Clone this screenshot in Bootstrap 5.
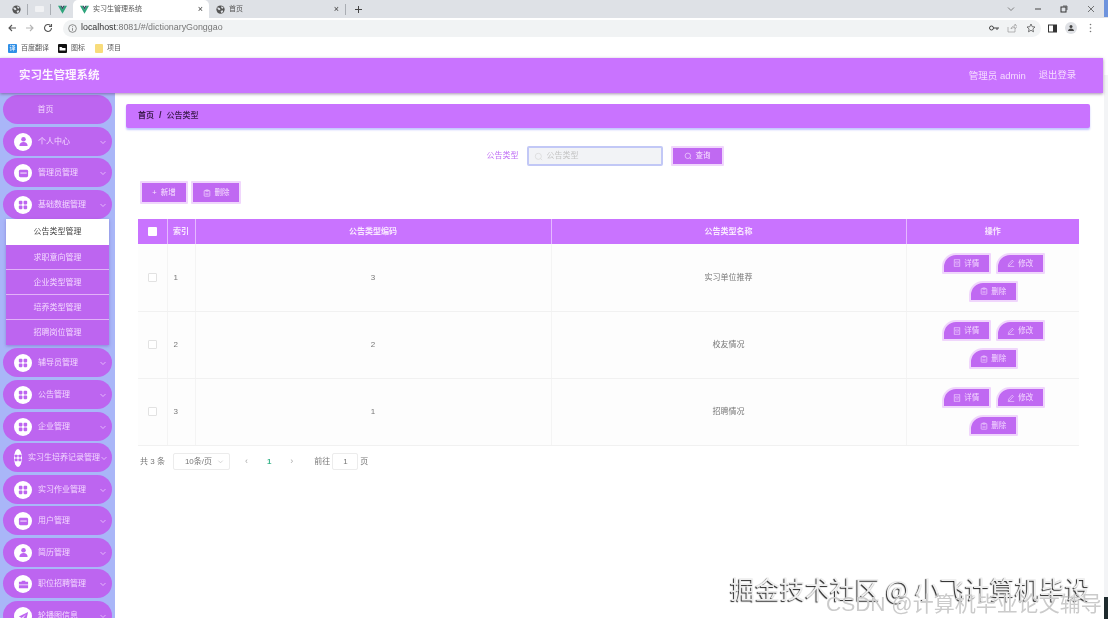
<!DOCTYPE html>
<html lang="zh-CN">
<head>
  <meta charset="UTF-8">
  <title>实习生管理系统</title>
  <link href="https://cdn.jsdelivr.net/npm/bootstrap@5.3.3/dist/css/bootstrap.min.css" rel="stylesheet">
  <style>
    html, body { height: 621px; overflow: hidden; background: #fff; }
    body { font-family: "Liberation Sans", "Noto Sans CJK SC", sans-serif; font-size: 8px; color: #666; filter: blur(.3px); }
    svg { display: block; flex: none; }

    /* browser chrome */
    .tab-strip { height: 18px; background: #dee1e6; color: #555; padding-left: 5px; }
    .mini-tab { width: 22px; height: 18px; }
    .tab-sep { width: 1px; height: 11px; background: #a9adb3; }
    .page-tab { width: 136px; height: 18px; padding: 0 6px 0 7px; font-size: 7px; border-radius: 5px 5px 0 0; }
    .page-tab.on { background: #fff; }
    .tab-title { flex: 1; margin-left: 4px; white-space: nowrap; }
    .tab-x { font-size: 9px; line-height: 1; color: #444; }
    .win-group { width: 106px; }
    .win-btn { width: 26.5px; }
    .url-row { height: 20px; background: #fff; padding-left: 7px; }
    .url-pill { width: 978px; height: 17px; margin-left: 10px; background: #f1f3f4; border-radius: 9px; padding: 0 5px 0 5px; font-size: 8.9px; color: #777; }
    .url-host { color: #333; }
    .url-share { margin-left: 8px; }
    .url-star { margin-left: 9px; }
    .url-right { margin-left: 7px; }
    .bm-row { height: 20px; background: #fff; padding-left: 8px; font-size: 7px; color: #555; }
    .bm-ic { width: 9px; height: 9px; border-radius: 1px; color: #fff; background: #2f8fe6; font-size: 6px; line-height: 9px; text-align: center; }
    .bm-two { margin-left: 9px; }
    .bm-three { margin-left: 10px; }

    /* app */
    .app-wrap { width: 1103px; height: 561px; }
    .app-top { height: 35px; background: #c973ff; box-shadow: 0 1px 3px rgba(90,50,110,.55); color: #f6dcff; padding: 1px 27px 0 19px; position: relative; z-index: 2; }
    .app-title { font-size: 11.5px; font-weight: 700; color: #fdf3ff; }
    .app-user { font-size: 9.5px; margin-right: 13px; }
    .app-exit { font-size: 9.3px; }
    .side-bar { width: 115px; height: 525px; background: #a9b6f8; padding: 2px 3px 0; overflow: hidden; flex: none; }
    .side-item { height: 29px; margin-bottom: 2.6px; padding: 1px 5px 0 11px; background: #bd65f0; border-radius: 15px; color: #f3d8ff; white-space: nowrap; }
    .side-item.home { justify-content: center; padding: 1px 24px 0 0; }
    .side-dot { width: 18px; height: 18px; border-radius: 50%; background: #fff; color: #bd65f0; margin-right: 6px; }
    .side-dot.slim { width: 9px; }
    .side-text { flex: 1; overflow: visible; }
    .side-sub { margin: -2px 3px 3px; background: #bd65f0; color: #f3d8ff; box-shadow: 0 1px 3px rgba(90,60,170,.4); }
    .side-sub div { height: 25.2px; line-height: 26px; text-align: center; border-bottom: 1px solid #e2b2f8; }
    .side-sub div:last-child { border-bottom: 0; }
    .side-sub .on { background: #fff; color: #444; border-bottom: 0; }

    .main-area { min-width: 0; padding: 11px 13px 0 11px; }
    .crumb-bar { height: 24px; background: #c973ff; border-radius: 2px; box-shadow: 0 2px 2px #c3c6ff; padding-left: 12px; color: #3a1a4c; font-weight: 700; }
    .crumb-bar i { font-style: normal; margin: 0 5px; font-size: 9px; }
    .crumb-bar span { font-weight: 500; }
    .search-row { margin-top: 18px; height: 20px; padding-right: 6px; }
    .search-label { color: #c06ff5; margin-right: 8px; }
    .search-box { width: 136px; height: 20px; background: #f2f3f6; border: 2px solid #c2c8f6; border-radius: 2px; color: #c4c4c4; padding-left: 5px; margin-right: 8px; }
    .pu-btn { background: #c069f2; color: #f8e4ff; border: 2px solid #f0d6fc; border-radius: 1px; height: 23px; font-size: 7.5px; padding: 0; }
    .search-row .pu-btn { width: 53px; height: 20px; }
    .tool-row { margin: 15px 0 0 14px; height: 23px; gap: 3px; }
    .tool-row .add { width: 48px; }
    .tool-row .del { width: 50px; }
    .data-wrap { margin: 15px 0 0 12px; width: 941px; }
    .data-wrap table { table-layout: fixed; margin: 0; font-size: 8px; }
    .col-tick { width: 29px; }
    .col-idx { width: 28px; }
    .col-code { width: 356px; }
    .col-name { width: 355px; }
    .col-act { width: 173px; }
    .data-wrap th { height: 25px; padding: 0; background: #c973ff; color: #f9e8ff; text-align: center; vertical-align: middle; font-weight: 700; border: 0; border-left: 1px solid #e5b9ff; border-bottom: 0; }
    .data-wrap th:first-child { border-left: 0; }
    .data-wrap td { height: 67px; padding: 1px 0 0; background: #fdfdfd; color: #777; text-align: center; vertical-align: middle; border: 0; border-left: 1px solid #f4f4f4; border-bottom: 1px solid #f1f1f1; }
    .data-wrap td:first-child { border-left: 0; }
    .data-wrap td.num { text-align: left; padding-left: 6px; }
    .data-wrap td.ops { padding-top: 0; }
    .tick { width: 9px; height: 9px; border: 1px solid #e2e2e2; background: #fff; border-radius: 1px; display: inline-block; vertical-align: middle; }
    th .tick { background: #fff; border: 0; }
    .act-row { justify-content: center; gap: 5px; padding-left: 1px; }
    .act-row + .act-row { margin-top: 7px; }
    .act-btn { width: 49px; height: 21px; background: #c069f2; color: #f3d8ff; border: 2px solid #f0d6fc; border-radius: 14px 1px 1px 1px; font-size: 7.5px; padding: 0; gap: 3px; }
    .pager-row { margin: 6px 0 0 14px; height: 20px; color: #777; }
    .page-size { width: 57px; height: 17px; margin: 0 15px 0 8px; border: 1px solid #ececec; border-radius: 2px; padding: 0 5px 0 11px; }
    .page-cur { margin: 0 19px; color: #3cb58c; font-weight: 700; }
    .page-go { margin-left: 21px; }
    .page-jump { width: 26px; height: 17px; margin: 0 2px; border: 1px solid #ececec; border-radius: 2px; text-align: center; line-height: 15px; }
    .page-arrow { color: #aaa; font-size: 9px; line-height: 1; }

    /* overlays */
    .mark-one { position: absolute; left: 730px; top: 572px; font-size: 25px; line-height: 32px; color: #efefef; text-shadow: -1px 1px 1px #222; white-space: nowrap; font-family: "Noto Sans CJK SC", sans-serif; }
    .mark-two { position: absolute; left: 826px; top: 590px; font-size: 21px; line-height: 28px; color: #cbcbcb; white-space: nowrap; width: 282px; overflow: hidden; font-family: "Liberation Sans", "Noto Sans CJK SC", sans-serif; }
    .edge-top { position: absolute; left: 1104px; top: 0; width: 4px; height: 17px; background: #6d93dd; }
    .edge-side { position: absolute; left: 1104px; top: 75px; width: 4px; height: 522px; background: #f3f4f6; }
    .edge-low { position: absolute; left: 1104px; top: 597px; width: 4px; height: 22px; background: #1f2b2e; }
  </style>
</head>
<body>
<svg width="0" height="0" class="position-absolute">
  <symbol id="i-globe" viewBox="0 0 12 12"><circle cx="6" cy="6" r="5.5" fill="#555"/><path d="M2 3l3 1 1 2-2 1-2-2zM7 1.5l3 1.5-1 2-2-1zM6 8l3-1 .5 2-2 2z" fill="#dee1e6"/></symbol>
  <symbol id="i-vue" viewBox="0 0 12 12"><path d="M0 1h3l3 5 3-5h3L6 11.5z" fill="#2fa57c"/><path d="M3 1h2l1 2 1-2h2L6 6z" fill="#35495e"/></symbol>
  <symbol id="i-user" viewBox="0 0 12 12"><circle cx="6" cy="3.6" r="2.5" fill="currentColor"/><path d="M1.5 11c0-3 2-4.5 4.5-4.5s4.500 1.500 4.500 4.500z" fill="currentColor"/></symbol>
  <symbol id="i-grid" viewBox="0 0 12 12"><rect x="1" y="1" width="4.300" height="4.300" rx="1" fill="currentColor"/><rect x="6.700" y="1" width="4.300" height="4.300" rx="1" fill="currentColor"/><rect x="1" y="6.700" width="4.300" height="4.300" rx="1" fill="currentColor"/><rect x="6.700" y="6.700" width="4.300" height="4.300" rx="1" fill="currentColor"/></symbol>
  <symbol id="i-card" viewBox="0 0 12 12"><rect x="1" y="2" width="10" height="8" rx="1.500" fill="currentColor"/><rect x="2.500" y="5" width="7" height="1" fill="#fff"/></symbol>
  <symbol id="i-bag" viewBox="0 0 12 12"><path d="M4 3V2h4v1h3v7H1V3z" fill="currentColor"/><rect x="1" y="6" width="10" height=".8" fill="#fff"/></symbol>
  <symbol id="i-send" viewBox="0 0 12 12"><path d="M11 1L1 6l3 1.500L9 3.500 5 8.500V11l2-2 2 1z" fill="currentColor"/></symbol>
  <symbol id="i-down" viewBox="0 0 8 8"><path d="M1.500 3L4 5.500 6.500 3" fill="none" stroke="currentColor" stroke-width=".7"/></symbol>
  <symbol id="i-doc" viewBox="0 0 10 10"><rect x="1.500" y="1" width="7" height="8" fill="none" stroke="currentColor" stroke-width=".8"/><path d="M3 6.500h4M3 3.500h4v1.500H3z" fill="none" stroke="currentColor" stroke-width=".6"/></symbol>
  <symbol id="i-pen" viewBox="0 0 10 10"><path d="M2 6.500L6.500 1.500l1.500 1.500L3.500 8 1.800 8.300zM1 9.300h8" fill="none" stroke="currentColor" stroke-width=".8"/></symbol>
  <symbol id="i-clip" viewBox="0 0 10 10"><rect x="1.500" y="2" width="7" height="7" rx=".5" fill="none" stroke="currentColor" stroke-width=".8"/><path d="M3.500 1h3v2h-3zM3 5.500h4M3 7h4" fill="none" stroke="currentColor" stroke-width=".6"/></symbol>
  <symbol id="i-find" viewBox="0 0 10 10"><circle cx="4.800" cy="4.800" r="3.400" fill="none" stroke="currentColor" stroke-width=".8"/><path d="M7.300 7.300L9 9" stroke="currentColor" stroke-width=".8"/></symbol>
</svg>

<div class="tab-strip d-flex align-items-center">
  <div class="mini-tab d-flex align-items-center justify-content-center"><svg width="9" height="9"><use href="#i-globe"/></svg></div>
  <div class="tab-sep"></div>
  <div class="mini-tab d-flex align-items-center justify-content-center"><svg width="9" height="6"><rect width="9" height="6" rx="1" fill="#f1f2f4"/></svg></div>
  <div class="tab-sep"></div>
  <div class="mini-tab d-flex align-items-center justify-content-center"><svg width="9" height="9"><use href="#i-vue"/></svg></div>
  <div class="page-tab on d-flex align-items-center">
    <svg width="9" height="9"><use href="#i-vue"/></svg>
    <span class="tab-title">实习生管理系统</span><span class="tab-x">×</span>
  </div>
  <div class="page-tab d-flex align-items-center">
    <svg width="9" height="9"><use href="#i-globe"/></svg>
    <span class="tab-title">首页</span><span class="tab-x">×</span>
  </div>
  <div class="tab-sep"></div>
  <svg width="9" height="9" class="ms-2" viewBox="0 0 9 9"><path d="M4.500 1v7M1 4.500h7" stroke="#444" stroke-width="1"/></svg>
  <div class="win-group d-flex align-items-center ms-auto me-1">
    <div class="win-btn d-flex justify-content-center"><svg width="8" height="8" viewBox="0 0 8 8"><path d="M1 2.500L4 5.500 7 2.500" fill="none" stroke="#666" stroke-width=".8"/></svg></div>
    <div class="win-btn d-flex justify-content-center"><svg width="8" height="8" viewBox="0 0 8 8"><path d="M1 4h6" stroke="#444"/></svg></div>
    <div class="win-btn d-flex justify-content-center"><svg width="8" height="8" viewBox="0 0 8 8"><rect x="1" y="2" width="5" height="5" fill="none" stroke="#333"/><path d="M3 1h4v4" fill="none" stroke="#333" stroke-width=".7"/></svg></div>
    <div class="win-btn d-flex justify-content-center"><svg width="8" height="8" viewBox="0 0 8 8"><path d="M1 1l6 6M7 1L1 7" stroke="#555" stroke-width=".8"/></svg></div>
  </div>
</div>

<div class="url-row d-flex align-items-center">
  <svg width="10" height="10" viewBox="0 0 10 10"><path d="M9 5H2M5 2L2 5l3 3" fill="none" stroke="#555" stroke-width="1.100"/></svg>
  <svg width="10" height="10" viewBox="0 0 10 10" class="ms-2"><path d="M1 5h7M5 2l3 3-3 3" fill="none" stroke="#b5b5b5" stroke-width="1.100"/></svg>
  <svg width="10" height="10" viewBox="0 0 10 10" class="ms-2"><path d="M8.500 5A3.500 3.500 0 1 1 7.500 2.500M8.500 1v2.500H6" fill="none" stroke="#555" stroke-width="1.100"/></svg>
  <div class="url-pill d-flex align-items-center">
    <svg width="9" height="9" viewBox="0 0 10 10" class="me-1"><circle cx="5" cy="5" r="4.300" fill="none" stroke="#666" stroke-width=".8"/><path d="M5 4.500v3M5 2.500v1" stroke="#666" stroke-width=".8"/></svg>
    <span><span class="url-host">localhost</span>:8081/#/dictionaryGonggao</span>
    <svg width="10" height="8" viewBox="0 0 10 8" class="ms-auto"><circle cx="2.500" cy="4" r="2" fill="none" stroke="#444" stroke-width="1"/><path d="M4.500 4H10M8 4v2" stroke="#444"/></svg>
    <svg width="10" height="10" viewBox="0 0 10 10" class="url-share"><path d="M1 4v5h7V6M4 6c0-2 2-3 4-3V1l2 2.500L8 6V4.500C6 4.500 5 5 4 6z" fill="none" stroke="#999" stroke-width=".7"/></svg>
    <svg width="10" height="10" viewBox="0 0 10 10" class="url-star"><path d="M5 1l1.200 2.700 2.800.3-2.100 1.900.6 2.900L5 7.300 2.500 8.800l.6-2.900L1 4l2.800-.3z" fill="none" stroke="#555" stroke-width=".8"/></svg>
  </div>
  <div class="url-right d-flex align-items-center gap-2">
    <svg width="9" height="9" viewBox="0 0 9 9"><rect x=".5" y="1" width="8" height="7" fill="none" stroke="#333"/><rect x="5" y="1" width="3.500" height="7" fill="#333"/></svg>
    <svg width="12" height="12" viewBox="0 0 12 12"><circle cx="6" cy="6" r="6" fill="#dfe1e5"/><circle cx="6" cy="4.600" r="1.500" fill="#444"/><path d="M3 9c0-1.800 1.300-2.600 3-2.600S9 7.200 9 9z" fill="#444"/></svg>
    <svg width="3" height="10" viewBox="0 0 3 10" class="ms-1"><circle cx="1.500" cy="1.500" r=".8" fill="#777"/><circle cx="1.500" cy="5" r=".8" fill="#777"/><circle cx="1.500" cy="8.500" r=".8" fill="#777"/></svg>
  </div>
</div>

<div class="bm-row d-flex align-items-center">
  <div class="bm-ic">译</div><span class="ms-1">百度翻译</span>
  <svg width="9" height="9" viewBox="0 0 9 9" class="bm-two"><rect width="9" height="9" rx="1" fill="#111"/><path d="M1.500 6.500V3h2l1 1h3v2.500z" fill="#fff"/></svg><span class="ms-1">图标</span>
  <svg width="8" height="9" viewBox="0 0 8 9" class="bm-three"><rect width="8" height="9" rx="1" fill="#f8dc7b"/></svg><span class="ms-1">项目</span>
</div>

<div class="app-wrap">
  <div class="app-top d-flex align-items-center">
    <div class="app-title">实习生管理系统</div>
    <div class="app-user ms-auto">管理员 admin</div>
    <div class="app-exit">退出登录</div>
  </div>
  <div class="d-flex">
    <div class="side-bar">
      <div class="side-item home d-flex align-items-center">首页</div>
      <div class="side-item d-flex align-items-center"><span class="side-dot d-flex align-items-center justify-content-center"><svg width="11" height="11"><use href="#i-user"/></svg></span><span class="side-text">个人中心</span><svg width="8" height="8"><use href="#i-down"/></svg></div>
      <div class="side-item d-flex align-items-center"><span class="side-dot d-flex align-items-center justify-content-center"><svg width="11" height="11"><use href="#i-card"/></svg></span><span class="side-text">管理员管理</span><svg width="8" height="8"><use href="#i-down"/></svg></div>
      <div class="side-item d-flex align-items-center"><span class="side-dot d-flex align-items-center justify-content-center"><svg width="10" height="10"><use href="#i-grid"/></svg></span><span class="side-text">基础数据管理</span><svg width="8" height="8"><use href="#i-down"/></svg></div>
      <div class="side-sub">
        <div class="on">公告类型管理</div>
        <div>求职意向管理</div>
        <div>企业类型管理</div>
        <div>培养类型管理</div>
        <div>招聘岗位管理</div>
      </div>
      <div class="side-item d-flex align-items-center"><span class="side-dot d-flex align-items-center justify-content-center"><svg width="10" height="10"><use href="#i-grid"/></svg></span><span class="side-text">辅导员管理</span><svg width="8" height="8"><use href="#i-down"/></svg></div>
      <div class="side-item d-flex align-items-center"><span class="side-dot d-flex align-items-center justify-content-center"><svg width="10" height="10"><use href="#i-grid"/></svg></span><span class="side-text">公告管理</span><svg width="8" height="8"><use href="#i-down"/></svg></div>
      <div class="side-item d-flex align-items-center"><span class="side-dot d-flex align-items-center justify-content-center"><svg width="10" height="10"><use href="#i-grid"/></svg></span><span class="side-text">企业管理</span><svg width="8" height="8"><use href="#i-down"/></svg></div>
      <div class="side-item d-flex align-items-center"><span class="side-dot slim d-flex align-items-center justify-content-center"><svg width="8" height="8"><use href="#i-grid"/></svg></span><span class="side-text">实习生培养记录管理</span><svg width="8" height="8"><use href="#i-down"/></svg></div>
      <div class="side-item d-flex align-items-center"><span class="side-dot d-flex align-items-center justify-content-center"><svg width="10" height="10"><use href="#i-grid"/></svg></span><span class="side-text">实习作业管理</span><svg width="8" height="8"><use href="#i-down"/></svg></div>
      <div class="side-item d-flex align-items-center"><span class="side-dot d-flex align-items-center justify-content-center"><svg width="11" height="11"><use href="#i-card"/></svg></span><span class="side-text">用户管理</span><svg width="8" height="8"><use href="#i-down"/></svg></div>
      <div class="side-item d-flex align-items-center"><span class="side-dot d-flex align-items-center justify-content-center"><svg width="11" height="11"><use href="#i-user"/></svg></span><span class="side-text">简历管理</span><svg width="8" height="8"><use href="#i-down"/></svg></div>
      <div class="side-item d-flex align-items-center"><span class="side-dot d-flex align-items-center justify-content-center"><svg width="11" height="11"><use href="#i-bag"/></svg></span><span class="side-text">职位招聘管理</span><svg width="8" height="8"><use href="#i-down"/></svg></div>
      <div class="side-item d-flex align-items-center"><span class="side-dot d-flex align-items-center justify-content-center"><svg width="11" height="11"><use href="#i-send"/></svg></span><span class="side-text">轮播图信息</span><svg width="8" height="8"><use href="#i-down"/></svg></div>
    </div>

    <div class="main-area flex-grow-1">
      <div class="crumb-bar d-flex align-items-center">首页<i>/</i><span>公告类型</span></div>

      <div class="search-row d-flex align-items-center justify-content-center">
        <span class="search-label">公告类型</span>
        <div class="search-box d-flex align-items-center">
          <svg width="9" height="9" class="me-1" color="#d8d8d8"><use href="#i-find"/></svg>
          <span>公告类型</span>
        </div>
        <button class="pu-btn d-flex align-items-center justify-content-center gap-1"><svg width="8" height="8"><use href="#i-find"/></svg>查询</button>
      </div>

      <div class="tool-row d-flex">
        <button class="pu-btn add">+&nbsp;&nbsp;新增</button>
        <button class="pu-btn del d-flex align-items-center justify-content-center gap-1"><svg width="8" height="8"><use href="#i-clip"/></svg>删除</button>
      </div>

      <div class="data-wrap">
        <table class="table">
          <colgroup><col class="col-tick"><col class="col-idx"><col class="col-code"><col class="col-name"><col class="col-act"></colgroup>
          <thead>
            <tr><th><span class="tick"></span></th><th>索引</th><th>公告类型编码</th><th>公告类型名称</th><th>操作</th></tr>
          </thead>
          <tbody id="dict-rows"></tbody>
        </table>
      </div>

      <div class="pager-row d-flex align-items-center">
        <span>共 3 条</span>
        <div class="page-size d-flex align-items-center justify-content-between"><span>10条/页</span><svg width="7" height="7" viewBox="0 0 8 8" color="#bbb"><use href="#i-down"/></svg></div>
        <span class="page-arrow">‹</span>
        <span class="page-cur">1</span>
        <span class="page-arrow">›</span>
        <span class="page-go">前往</span>
        <div class="page-jump">1</div>
        <span>页</span>
      </div>
    </div>
  </div>
</div>

<div class="edge-top"></div>
<div class="edge-side"></div>
<div class="edge-low"></div>
<div class="mark-one">掘金技术社区 @ 小飞计算机毕设</div>
<div class="mark-two">CSDN @计算机毕业论文辅导</div>

<script src="https://cdn.jsdelivr.net/npm/bootstrap@5.3.3/dist/js/bootstrap.bundle.min.js"></script>
<script>
  const rows = [
    { no: 1, code: 3, name: "实习单位推荐" },
    { no: 2, code: 2, name: "校友情况" },
    { no: 3, code: 1, name: "招聘情况" },
  ];
  const actBtn = (icon, text) =>
    `<button class="act-btn d-flex align-items-center justify-content-center"><svg width="8" height="8"><use href="#${icon}"/></svg>${text}</button>`;
  document.getElementById("dict-rows").innerHTML = rows.map(row => `
    <tr>
      <td><span class="tick"></span></td>
      <td class="num">${row.no}</td>
      <td>${row.code}</td>
      <td>${row.name}</td>
      <td class="ops">
        <div class="act-row d-flex">${actBtn("i-doc", "详情")}${actBtn("i-pen", "修改")}</div>
        <div class="act-row d-flex">${actBtn("i-clip", "删除")}</div>
      </td>
    </tr>`).join("");
</script>
</body>
</html>
